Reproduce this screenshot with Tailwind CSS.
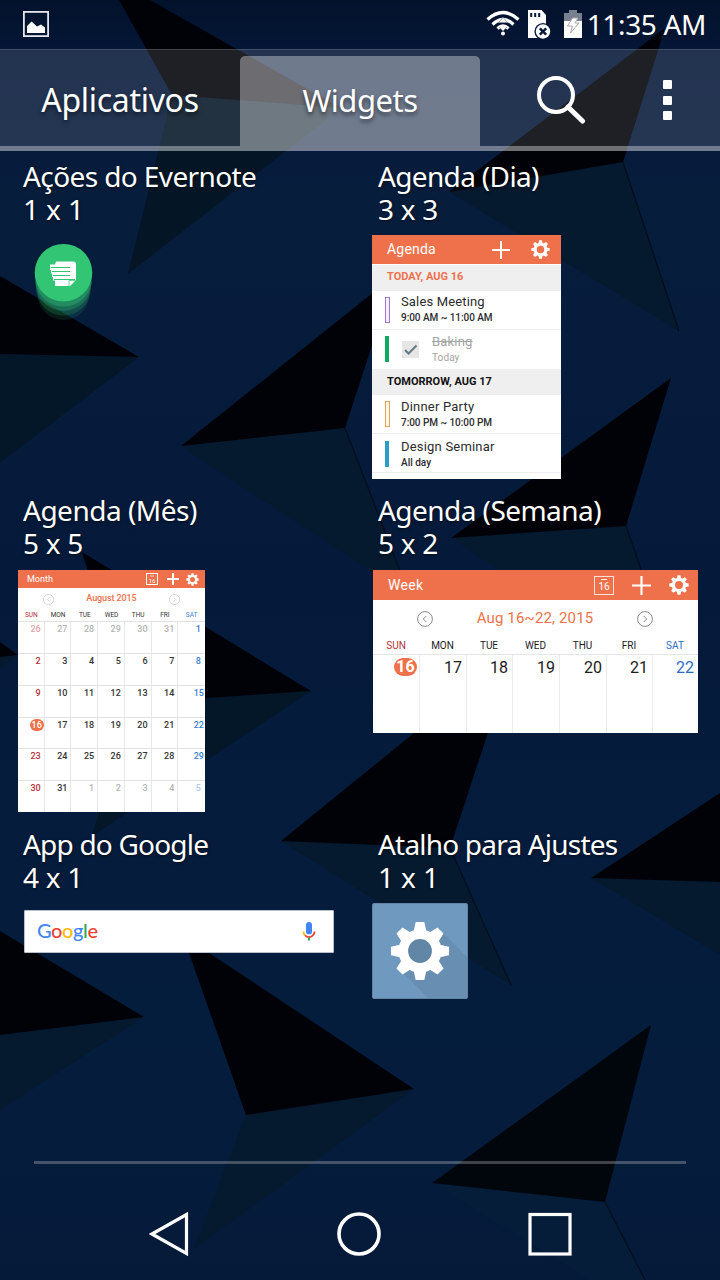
<!DOCTYPE html>
<html lang="pt-BR">
  <head>
    <meta charset="UTF-8" />
    <meta name="viewport" content="width=device-width, initial-scale=1.0" />
    <title>Widgets</title>
    <script src="https://cdn.jsdelivr.net/npm/@tailwindcss/browser@4"></script>
  </head>
  <body class="bg-[#061b3b]">
    <!-- Shared icons -->
    <svg class="hidden">
      <symbol id="gear" viewBox="-30 -30 60 60">
        <circle r="16.7" fill="none" stroke="currentColor" stroke-width="9.6" />
        <g fill="currentColor">
          <path d="M-6.5-19L-4.3-29H4.3L6.5-19ZM-6.5 19L-4.3 29H4.3L6.5 19ZM-19-6.5L-29-4.3V4.3L-19 6.5ZM19-6.5L29-4.3V4.3L19 6.5Z" />
          <path transform="rotate(45)" d="M-6.5-19L-4.3-29H4.3L6.5-19ZM-6.5 19L-4.3 29H4.3L6.5 19ZM-19-6.5L-29-4.3V4.3L-19 6.5ZM19-6.5L29-4.3V4.3L19 6.5Z" />
        </g>
      </symbol>
      <symbol id="plus" viewBox="0 0 18 18">
        <path d="M9 0V18M0 9H18" stroke="currentColor" stroke-width="2" />
      </symbol>
      <symbol id="prev" viewBox="0 0 16 16">
        <circle cx="8" cy="8" r="7.4" fill="none" stroke="currentColor" />
        <path d="M9.3 5L6.3 8L9.3 11" fill="none" stroke="currentColor" />
      </symbol>
      <symbol id="next" viewBox="0 0 16 16">
        <circle cx="8" cy="8" r="7.4" fill="none" stroke="currentColor" />
        <path d="M6.7 5L9.7 8L6.7 11" fill="none" stroke="currentColor" />
      </symbol>
    </svg>

    <div class="relative w-[720px] h-[1280px] overflow-hidden text-white font-['Noto_Sans',sans-serif]">
      <!-- Wallpaper -->
      <svg class="absolute inset-0" width="720" height="1280" viewBox="0 0 720 1280">
        <defs>
          <linearGradient id="sky" x1="0" y1="0" x2="0" y2="1">
            <stop offset="0" stop-color="#03122b" />
            <stop offset=".05" stop-color="#05183a" />
            <stop offset=".15" stop-color="#071d3c" />
            <stop offset=".45" stop-color="#051a3a" />
            <stop offset=".8" stop-color="#051d3d" />
            <stop offset="1" stop-color="#051a39" />
          </linearGradient>
        </defs>
        <rect width="720" height="1280" fill="url(#sky)" />
        <g fill="#051a2f">
          <path fill="#041626" d="M172 95L341 108L128 274Z" />
          <path d="M449 192L623 162L679 331Z" />
          <path fill="#041728" d="M0 354L139 357L0 463Z" />
          <path d="M181 446L345 428L410 597Z" />
          <path d="M451 538L626 526L683 690Z" />
          <path fill="#041728" d="M130 703L311 691L92 836Z" />
          <path d="M0 657L18 655L0 668Z" />
          <path d="M281 841L450 848L511 985Z" />
          <path d="M591 878L720 882V955Z" />
          <path d="M0 1035L144 1017L0 1110Z" />
          <path d="M246 1115L414 1089L194 1249Z" />
          <path fill="#061d39" d="M432 1183L605 1202L645 1280H590Z" />
        </g>
        <g fill="#010208">
          <path d="M119 0H150L341 108L172 95Z" />
          <path d="M665 28L623 162L449 192Z" />
          <path d="M0 276L139 357L0 354Z" />
          <path d="M181 446L395 275L345 428Z" />
          <path d="M671 378L626 526L451 538Z" />
          <path d="M82 552L311 691L130 703Z" />
          <path d="M0 642L18 655L0 657Z" />
          <path d="M281 841L515 651L450 848Z" />
          <path d="M591 878L720 793V882Z" />
          <path d="M0 931L144 1017L0 1035Z" />
          <path d="M189 953L182 935L414 1089L246 1115Z" />
          <path fill="#01060d" d="M651 1025L605 1202L432 1183Z" />
        </g>
        <g stroke="#020f1c" stroke-width="1.3">
          <path d="M623 162L679 331M345 428L410 597M626 526L683 690M450 848L511 985M605 1202L645 1280" />
        </g>
      </svg>

      <div class="relative flex flex-col h-full">
        <!-- Status bar -->
        <div class="h-[49px] flex items-center pl-[23px] pr-[14px]">
          <svg class="mt-[-2px]" width="26" height="26" viewBox="0 0 26 26">
            <rect x=".9" y=".9" width="24.2" height="24.2" fill="none" stroke="#e4e8ee" stroke-width="1.8" />
            <path d="M4 22V15L8.5 10.5L14 15.5L18 13.5L22 16.5V22Z" fill="#fff" />
          </svg>
          <div class="ml-auto flex items-center">
            <svg class="mt-[-3px]" width="34" height="26" viewBox="0 0 34 26">
              <g fill="none" stroke="#fff" stroke-width="3.2">
                <path d="M1.500 9.500Q17-4.500 32.500 9.500" />
                <path d="M6.500 14.500Q17 4.500 27.500 14.500" />
                <path d="M11.500 18.500Q17 13.500 22.500 18.500" />
              </g>
              <path d="M12.500 12.500L17 7.500L21.500 12.500ZM13 17L17 21L21 17" fill="#fff" stroke="#8d959f" stroke-width=".8" />
              <circle cx="17" cy="23.500" r="2" fill="#fff" />
            </svg>
            <svg class="ml-[8px]" width="24" height="29" viewBox="0 0 24 29">
              <path d="M0 0H13.500L18 5V28H0Z" fill="#fff" />
              <path d="M3.200 3V7M7.200 3V7M11.200 3V7" stroke="#05183a" stroke-width="2" />
              <circle cx="15" cy="21.500" r="8.600" fill="#05183a" />
              <circle cx="15" cy="21.500" r="7.200" fill="#fff" />
              <path d="M11.800 18.300L18.200 24.700M18.200 18.300L11.800 24.700" stroke="#05183a" stroke-width="2.400" />
            </svg>
            <svg class="ml-[12px] mt-[-1px]" width="18" height="28" viewBox="0 0 18 28">
              <path d="M0 3H5V0H13V3H18V11H0Z" fill="#76808f" />
              <path d="M0 11H18V28H0Z" fill="#fff" />
              <path d="M8.500 8H14L11 13H15L6.500 23L8.500 16H3.500Z" fill="#fff" stroke="#a5a8ad" />
            </svg>
            <span class="ml-[5px] mt-[-2px] text-[28px] leading-[34px] tracking-[-0.35px]">11:35 AM</span>
          </div>
        </div>

        <!-- Tabs -->
        <div class="h-[102px] flex flex-col border-t border-white/25">
          <div class="h-[96px] flex bg-white/12">
            <div class="w-[240px] flex items-center justify-center pt-[4px] text-[32px] tracking-[-0.3px] [text-shadow:0_3px_4px_rgb(0_0_0/0.5)]">Aplicativos</div>
            <div class="w-[240px] mt-[6px] pb-[2px] rounded-t-[5px] bg-white/35 flex items-center justify-center text-[31px] tracking-[-0.5px] [text-shadow:0_3px_4px_rgb(0_0_0/0.5)]">Widgets</div>
            <div class="flex-1 flex items-center">
              <svg class="ml-[56px] mt-[3px]" width="50" height="50" viewBox="0 0 50 50">
                <circle cx="20" cy="20" r="17" fill="none" stroke="#fff" stroke-width="4" />
                <path d="M32 32L46.500 46" stroke="#fff" stroke-width="5" stroke-linecap="round" />
              </svg>
              <div class="ml-[77px] mt-[4px] flex flex-col gap-[6.5px]">
                <i class="size-[9px] rounded-[1px] bg-white"></i>
                <i class="size-[9px] rounded-[1px] bg-white"></i>
                <i class="size-[9px] rounded-[1px] bg-white"></i>
              </div>
            </div>
          </div>
          <div class="h-[5px] bg-white/43"></div>
        </div>

        <!-- Widget list -->
        <div class="h-[1010px] pt-[9px] pl-[18px] grid grid-cols-[354px_348px] auto-rows-[334px]">
          <div>
            <div class="h-[67px] pl-[5px] text-[28px] leading-[33px] tracking-[-0.6px] [text-shadow:0_1px_3px_rgb(0_0_0/0.6)]">
              <p>Ações do Evernote</p>
              <p class="tracking-[-0.1px]">1 x 1</p>
            </div>
            <svg class="mt-[14px] ml-[14px]" width="64" height="90" viewBox="0 0 64 90">
              <g fill="#31c574">
                <circle cx="31.500" cy="53" r="26" fill-opacity=".12" />
                <circle cx="31.500" cy="47" r="27.500" fill-opacity=".2" />
                <circle cx="31.500" cy="42" r="28" fill-opacity=".28" />
                <circle cx="31.500" cy="37" r="28.500" fill-opacity=".35" />
                <circle cx="31.500" cy="31.700" r="28.800" />
              </g>
              <path d="M24 20.500H41Q44 20.500 44 23.500V39L38 45H23V39.500H21V36H20V32.500H19V29H18V23.500H23Z" fill="#fff" />
              <path d="M19 26.500H38M20 30.500H38M21 34.500H38M22 38.500H43" stroke="#31c574" stroke-width="1.200" />
              <path d="M37 45V39.500H43.500" fill="none" stroke="#31c574" stroke-width=".7" />
            </svg>
          </div>

          <div>
            <div class="h-[67px] pl-[6px] text-[28px] leading-[33px] tracking-[-0.65px] [text-shadow:0_1px_3px_rgb(0_0_0/0.6)]">
              <p>Agenda (Dia)</p>
              <p class="tracking-[-0.3px]">3 x 3</p>
            </div>
            <div class="mt-[8px] w-[189px] h-[244px] bg-white text-[#2b2b2b] font-[Roboto,sans-serif]">
              <div class="h-[29px] bg-[#ef714b] text-white flex items-center pl-[15px] pr-[11px]">
                <span class="text-[14px] mt-[-1px] tracking-[0.2px]">Agenda</span>
                <svg class="ml-auto" width="18" height="18"><use href="#plus" /></svg>
                <svg class="ml-[21px]" width="19" height="19"><use href="#gear" /></svg>
              </div>
              <div class="h-[26px] mt-px bg-[#efefef] pl-[15px] text-[11px] leading-[24px] font-bold text-[#ef714b]">TODAY, AUG 16</div>
              <div class="h-[39px] flex pl-[13px] border-b border-[#eee]">
                <i class="mt-[6px] w-[5px] h-[26px] border border-[#9a7ac8] bg-[#f4effa]"></i>
                <div class="ml-[11px] pt-[3px]">
                  <p class="text-[13px] leading-[16px] tracking-[0.15px]">Sales Meeting</p>
                  <p class="text-[10px] leading-[15px] font-medium tracking-[-0.05px]">9:00 AM ~ 11:00 AM</p>
                </div>
              </div>
              <div class="h-[39px] flex pl-[13px]">
                <i class="mt-[6px] w-[4px] h-[26px] bg-[#13a861]"></i>
                <svg class="ml-[13px] mt-[11px]" width="17" height="17" viewBox="0 0 17 17">
                  <rect width="17" height="17" fill="#e6e6e6" />
                  <path d="M3 9L6.500 12.500L14.500 4.500" fill="none" stroke="#6a7786" stroke-width="2" />
                </svg>
                <div class="ml-[13px] pt-[4px] text-[#a4a4a4]">
                  <p class="text-[13px] leading-[16px] tracking-[0.2px] line-through">Baking</p>
                  <p class="text-[10px] leading-[16px] tracking-[0.1px]">Today</p>
                </div>
              </div>
              <div class="h-[26px] bg-[#efefef] pl-[15px] text-[11px] leading-[25px] font-bold text-[#111]">TOMORROW, AUG 17</div>
              <div class="h-[39px] flex pl-[13px] border-b border-[#eee]">
                <i class="mt-[6px] w-[5px] h-[26px] border border-[#e3a356] bg-[#fdf6ec]"></i>
                <div class="ml-[11px] pt-[4px]">
                  <p class="text-[13px] leading-[16px] tracking-[0.2px]">Dinner Party</p>
                  <p class="text-[10px] leading-[15px] font-medium tracking-[-0.05px]">7:00 PM ~ 10:00 PM</p>
                </div>
              </div>
              <div class="h-[39px] flex pl-[13px] border-b border-[#eee]">
                <i class="mt-[7px] w-[4px] h-[26px] bg-[#2a9fc6]"></i>
                <div class="ml-[12px] pt-[5px]">
                  <p class="text-[13px] leading-[16px] tracking-[0.2px]">Design Seminar</p>
                  <p class="text-[10px] leading-[15px] font-medium">All day</p>
                </div>
              </div>
            </div>
          </div>

          <div>
            <div class="h-[67px] pl-[5px] text-[28px] leading-[33px] tracking-[-0.5px] [text-shadow:0_1px_3px_rgb(0_0_0/0.6)]">
              <p>Agenda (Mês)</p>
              <p class="tracking-[-0.3px]">5 x 5</p>
            </div>
            <div class="mt-[9px] w-[187px] h-[242px] bg-white text-[#333] font-[Roboto,sans-serif]">
              <div class="h-[18px] bg-[#ef714b] text-white flex items-center pl-[9px] pr-[6px]">
                <span class="text-[9px] mt-[2px]">Month</span>
                <svg class="ml-auto" width="12" height="12" viewBox="0 0 12 12">
                  <rect x=".5" y=".5" width="11" height="11" fill="none" stroke="#fff" />
                  <path d="M4 3H8" stroke="#fff" stroke-width=".7" />
                  <text x="6" y="9.500" font-size="6" text-anchor="middle" fill="#fff">16</text>
                </svg>
                <svg class="ml-[9px]" width="12" height="12" viewBox="0 0 12 12">
                  <path d="M6 0V12M0 6H12" stroke="#fff" stroke-width="2" />
                </svg>
                <svg class="ml-[7px]" width="13" height="13"><use href="#gear" /></svg>
              </div>
              <div class="h-[22px] flex items-center justify-between px-[25px] text-[9px] font-medium text-[#ef714b]">
                <svg class="text-[#c4c4c4]" width="11" height="11"><use href="#prev" /></svg>
                <span class="tracking-[-0.1px]">August 2015</span>
                <svg class="text-[#c4c4c4]" width="11" height="11"><use href="#next" /></svg>
              </div>
              <div class="h-[11px] grid grid-cols-7 text-center text-[6.5px] leading-[10px]">
                <span class="text-[#b5323a]">SUN</span><span>MON</span><span>TUE</span><span>WED</span><span>THU</span><span>FRI</span><span class="text-[#3c7fc9]">SAT</span>
              </div>
              <div id="month" class="h-[191px] grid grid-cols-7 grid-rows-6 text-right text-[9px] leading-[14px] font-medium"></div>
            </div>
          </div>

          <div>
            <div class="h-[67px] pl-[6px] text-[28px] leading-[33px] tracking-[-0.55px] [text-shadow:0_1px_3px_rgb(0_0_0/0.6)]">
              <p>Agenda (Semana)</p>
              <p class="tracking-[-0.3px]">5 x 2</p>
            </div>
            <div class="mt-[9px] ml-px w-[325px] h-[163px] bg-white text-[#1c1c1c] font-[Roboto,sans-serif]">
              <div class="h-[30px] bg-[#ef714b] text-white flex items-center pl-[15px] pr-[9px]">
                <span class="text-[14px] tracking-[0.3px]">Week</span>
                <svg class="ml-auto" width="20" height="19" viewBox="0 0 20 19">
                  <rect x=".5" y=".5" width="19" height="18" fill="none" stroke="#fff" stroke-opacity=".8" />
                  <path d="M7 3.500H13" stroke="#fff" />
                  <text x="10" y="14" font-size="10" text-anchor="middle" fill="#fff">16</text>
                </svg>
                <svg class="ml-[18px]" width="19" height="19"><use href="#plus" /></svg>
                <svg class="ml-[18px]" width="20" height="20"><use href="#gear" /></svg>
              </div>
              <div class="h-[38px] flex items-center justify-between pl-[44px] pr-[45px] text-[15px] text-[#ef714b]">
                <svg class="text-[#8a8a8a]" width="16" height="16"><use href="#prev" /></svg>
                <span class="mt-[-1px] tracking-[0.15px]">Aug 16~22, 2015</span>
                <svg class="text-[#8a8a8a]" width="16" height="16"><use href="#next" /></svg>
              </div>
              <div class="h-[16px] grid grid-cols-[46px_47px_46px_47px_47px_46px_46px] text-center text-[10px] leading-[15px]">
                <span class="text-[#b5323a]">SUN</span><span>MON</span><span>TUE</span><span>WED</span><span>THU</span><span>FRI</span><span class="text-[#2d6cbf]">SAT</span>
              </div>
              <div id="week" class="h-[79px] grid grid-cols-[47px_47px_46px_47px_47px_46px_45px] border-t border-[#e6e6e6] text-right text-[16px] leading-[25px]"></div>
            </div>
          </div>

          <div>
            <div class="h-[67px] pl-[5px] text-[28px] leading-[33px] tracking-[-0.8px] [text-shadow:0_1px_3px_rgb(0_0_0/0.6)]">
              <p>App do Google</p>
              <p class="tracking-[-0.3px]">4 x 1</p>
            </div>
            <div class="mt-[15px] ml-[6px] w-[310px] h-[43px] rounded-[1px] border border-[#b9c0c9] bg-white flex items-center justify-between pl-[12px] pr-[17px]">
              <span class="text-[20px] leading-[24px] mt-[-3px] tracking-[-0.4px] font-[Lato,sans-serif] font-medium"><span class="text-[#4285f4]">G</span><span class="text-[#ea4335]">o</span><span class="text-[#fbbc05]">o</span><span class="text-[#4285f4]">g</span><span class="text-[#34a853]">l</span><span class="text-[#ea4335]">e</span></span>
              <svg class="mt-[-1px]" width="14" height="20" viewBox="0 0 14 20">
                <rect x="4" y="1" width="6" height="12.500" rx="3" fill="#4285f4" />
                <path d="M1.500 10.500Q1.500 13 3 14.500" fill="none" stroke="#fbbc05" stroke-width="1.800" />
                <path d="M3 14.300Q7 18 11 14.300Q12.500 13 12.500 10.500" fill="none" stroke="#ea4335" stroke-width="1.800" />
                <path d="M7 16.500V19.500" stroke="#34a853" stroke-width="2" />
              </svg>
            </div>
          </div>

          <div>
            <div class="h-[67px] pl-[6px] text-[28px] leading-[33px] tracking-[-0.8px] [text-shadow:0_1px_3px_rgb(0_0_0/0.6)]">
              <p>Atalho para Ajustes</p>
              <p class="tracking-[-0.1px]">1 x 1</p>
            </div>
            <svg class="mt-[8px]" width="96" height="96" viewBox="0 0 96 96">
              <rect x=".5" y=".5" width="95" height="95" rx="1.500" fill="#7099c0" stroke="#6283a2" />
              <path d="M71 30L95 54V95H56L27 66Z" fill="#688fb1" />
              <circle cx="48" cy="48" r="14" fill="#6286a5" />
              <svg x="18" y="18" width="60" height="60" class="text-white"><use href="#gear" /></svg>
            </svg>
          </div>
        </div>

        <div class="mx-[34px] h-[3px] bg-white/25"></div>

        <!-- Navigation bar -->
        <div class="mt-[46px] flex items-center pl-[149px] pr-[147px] justify-between">
          <svg width="42" height="48" viewBox="0 0 42 48">
            <path d="M3 24L37.500 4.500V43.500Z" fill="none" stroke="#fff" stroke-width="3.200" />
          </svg>
          <svg width="46" height="48" viewBox="0 0 46 48">
            <circle cx="23" cy="24" r="20" fill="none" stroke="#fff" stroke-width="3.600" />
          </svg>
          <svg width="46" height="48" viewBox="0 0 46 48">
            <rect x="3" y="4.500" width="40" height="39.500" fill="none" stroke="#fff" stroke-width="3.200" />
          </svg>
        </div>
      </div>
    </div>

    <script>
      // August 2015, padded with the last days of July and the first of September
      const monthDays = [26, 27, 28, 29, 30, 31];
      for (let d = 1; d <= 31; d++) monthDays.push(d);
      monthDays.push(1, 2, 3, 4, 5);

      document.getElementById("month").innerHTML = monthDays
        .map((day, i) => {
          const outside = i < 6 || i > 36;
          const col = i % 7;
          let color = outside ? "text-[#b4b4b4]" : "";
          if (col === 0) color = outside ? "text-[#e0a3a6]" : "text-[#b5323a]";
          if (col === 6) color = outside ? "text-[#aecbea]" : "text-[#3c7fc9]";
          let pad = col === 6 ? "pr-[1px]" : "pr-[3px] border-r border-[#e8e8e8]";
          if (col === 6 && day < 10) pad = "pr-[4px]";
          const label =
            i === 21
              ? `<span class="block w-[14px] h-[12px] mt-px ml-auto mr-[-3px] rounded-full bg-[#ef714b] text-white text-center leading-[12px]">${day}</span>`
              : day;
          return `<div class="border-t border-t-[#e2e2e2] ${pad} ${color}">${label}</div>`;
        })
        .join("");

      document.getElementById("week").innerHTML = [16, 17, 18, 19, 20, 21, 22]
        .map((day, i) => {
          const pad = i === 6 ? "pr-[4px] text-[#2d6cbf]" : "pr-[4px] border-r border-[#ececec]";
          const label =
            i === 0
              ? `<span class="block w-[23px] h-[18px] mt-[3px] ml-auto mr-[-2px] rounded-full bg-[#ef714b] text-white text-center font-bold leading-[18px]">${day}</span>`
              : day;
          return `<div class="${pad}">${label}</div>`;
        })
        .join("");
    </script>
  </body>
</html>
